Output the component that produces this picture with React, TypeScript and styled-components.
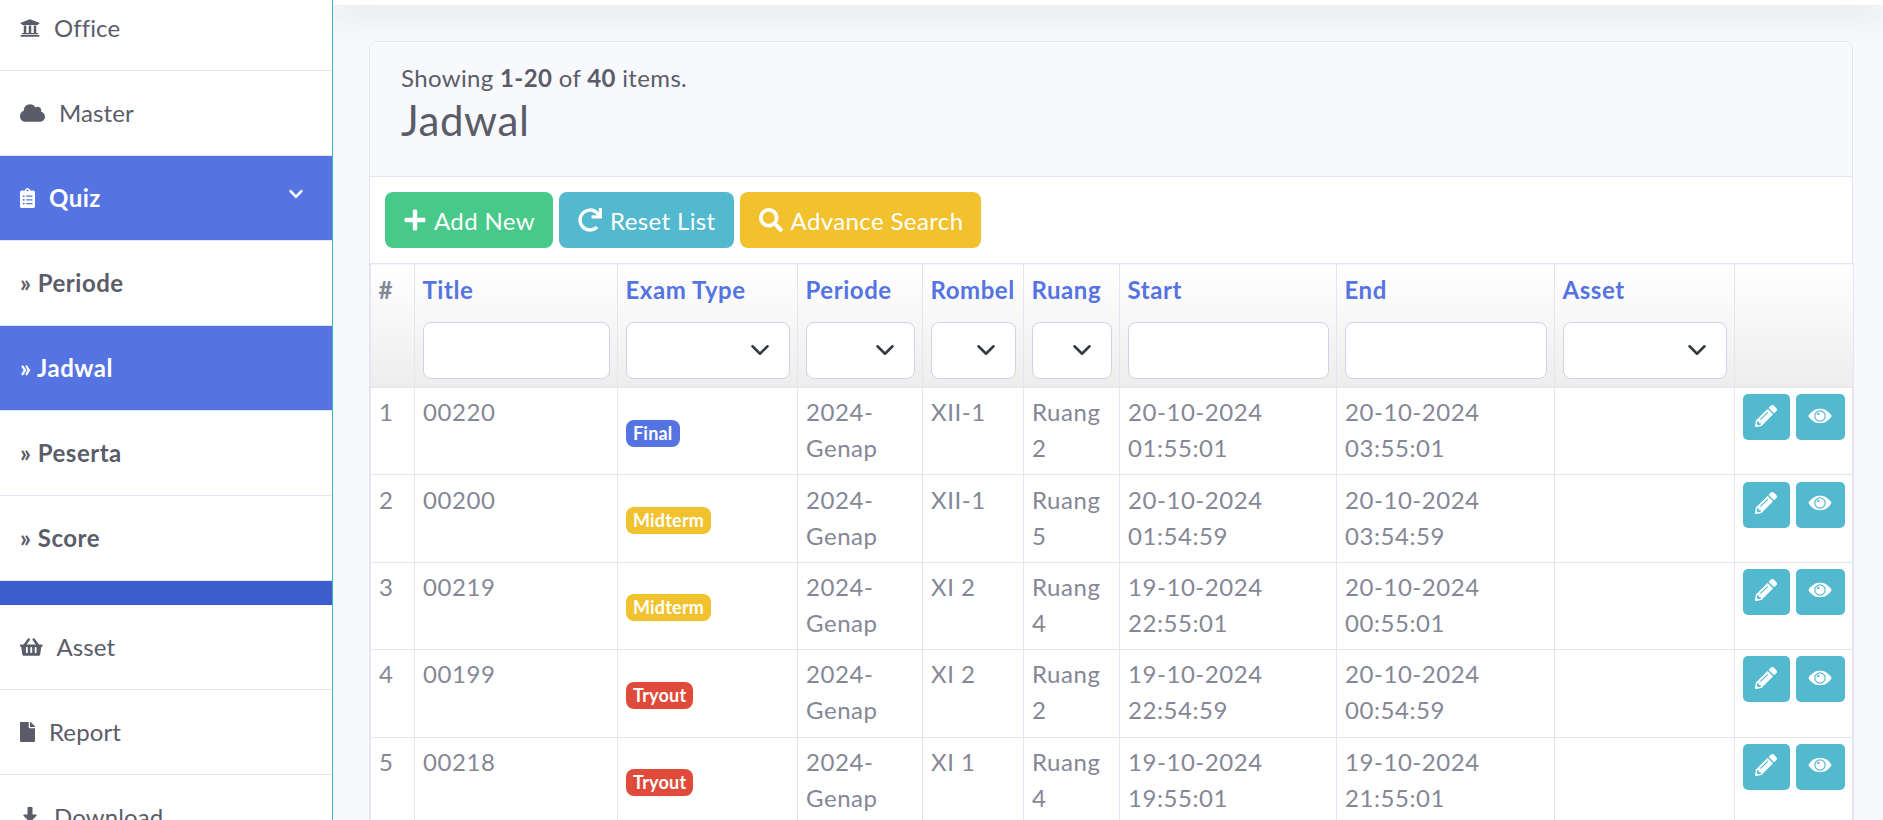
import React from "react";
import styled, { createGlobalStyle } from "styled-components";
import {
  FaUniversity,
  FaCloud,
  FaClipboardList,
  FaChevronDown,
  FaShoppingBasket,
  FaFile,
  FaDownload,
  FaPlus,
  FaRedo,
  FaSearch,
  FaPencilAlt,
} from "react-icons/fa";

const FONT = `Lato, "Noto Sans", sans-serif`;

const GlobalStyle = createGlobalStyle`
  html, body {
    margin: 0;
    height: 100%;
    overflow: hidden;
    background: #f8f9fc;
    font-family: ${FONT};
  }
  * { box-sizing: border-box; }
`;

type Kind = "Final" | "Midterm" | "Tryout";

const rows: {
  no: number;
  title: string;
  type: Kind;
  rombel: string;
  ruang: string;
  start: string;
  end: string;
}[] = [
  { no: 1, title: "00220", type: "Final", rombel: "XII-1", ruang: "Ruang 2", start: "20-10-2024 01:55:01", end: "20-10-2024 03:55:01" },
  { no: 2, title: "00200", type: "Midterm", rombel: "XII-1", ruang: "Ruang 5", start: "20-10-2024 01:54:59", end: "20-10-2024 03:54:59" },
  { no: 3, title: "00219", type: "Midterm", rombel: "XI 2", ruang: "Ruang 4", start: "19-10-2024 22:55:01", end: "20-10-2024 00:55:01" },
  { no: 4, title: "00199", type: "Tryout", rombel: "XI 2", ruang: "Ruang 2", start: "19-10-2024 22:54:59", end: "20-10-2024 00:54:59" },
  { no: 5, title: "00218", type: "Tryout", rombel: "XI 1", ruang: "Ruang 4", start: "19-10-2024 19:55:01", end: "19-10-2024 21:55:01" },
];

const columns: { label: string; width: number; control?: "input" | "select" }[] = [
  { label: "#", width: 44 },
  { label: "Title", width: 203, control: "input" },
  { label: "Exam Type", width: 180, control: "select" },
  { label: "Periode", width: 125, control: "select" },
  { label: "Rombel", width: 101, control: "select" },
  { label: "Ruang", width: 96, control: "select" },
  { label: "Start", width: 217, control: "input" },
  { label: "End", width: 218, control: "input" },
  { label: "Asset", width: 180, control: "select" },
  { label: "", width: 119 },
];

const Chevron = () => (
  <ChevronIcon viewBox="0 0 16 16" fill="none" stroke="#343a40" strokeWidth="2" strokeLinecap="round" strokeLinejoin="round">
    <path d="M2 5l6 6 6-6" />
  </ChevronIcon>
);

// the eye in the reference has a ring and a small pupil spot, unlike the package icon
const EyeGlyph = () => (
  <EyeSvg viewBox="0 0 24 16">
    <path fill="#fff" d="M0.4 8C3 3.4 7 .8 12 .8S21 3.4 23.6 8C21 12.6 17 15.2 12 15.2S3 12.6 .4 8z" />
    <circle cx="12" cy="8" r="5.2" fill="none" stroke="#53b9cf" strokeWidth="1.2" />
    <circle cx="10.3" cy="5.9" r="1.2" fill="#53b9cf" />
  </EyeSvg>
);

const App = () => {
  return (
    <>
      <GlobalStyle />
      <Page>
        <Sidebar>
          <NavItem>
            <NavIcon $w={20}>
              <FaUniversity />
            </NavIcon>
            Office
          </NavItem>
          <NavItem>
            <NavIcon $w={25}>
              <FaCloud />
            </NavIcon>
            Master
          </NavItem>
          <NavItem $active $bold>
            <NavIcon $w={15}>
              <FaClipboardList />
            </NavIcon>
            Quiz
            <NavCaret>
              <FaChevronDown />
            </NavCaret>
          </NavItem>
          <NavItem $bold>» Periode</NavItem>
          <NavItem $bold $active>
            » Jadwal
          </NavItem>
          <NavItem $bold>» Peserta</NavItem>
          <NavItem $bold>» Score</NavItem>
          <NavStrip />
          <NavItem>
            <NavIcon $w={22.5}>
              <FaShoppingBasket />
            </NavIcon>
            Asset
          </NavItem>
          <NavItem>
            <NavIcon $w={15}>
              <FaFile />
            </NavIcon>
            Report
          </NavItem>
          <NavItem>
            <NavIcon $w={20}>
              <FaDownload />
            </NavIcon>
            Download
          </NavItem>
        </Sidebar>
        <Main>
          <Topbar />
          <Card>
            <CardHeader>
              <Summary>
                Showing <b>1-20</b> of <b>40</b> items.
              </Summary>
              <Heading>Jadwal</Heading>
            </CardHeader>
            <Toolbar>
              <ActionButton $bg="#47c98a">
                <ButtonIcon $w={22}>
                  <FaPlus />
                </ButtonIcon>
                Add New
              </ActionButton>
              <ActionButton $bg="#53b9cf">
                <ButtonIcon $w={24}>
                  <FaRedo />
                </ButtonIcon>
                Reset List
              </ActionButton>
              <ActionButton $bg="#f2c12e">
                <ButtonIcon $w={24}>
                  <FaSearch />
                </ButtonIcon>
                Advance Search
              </ActionButton>
            </Toolbar>
            <Table>
              <colgroup>
                {columns.map((c, i) => (
                  <Col key={i} $w={c.width} />
                ))}
              </colgroup>
              <thead>
                <tr>
                  {columns.map((c, i) => (
                    <HeadCell key={i}>
                      <HeadLabel $plain={i === 0}>{c.label}</HeadLabel>
                      {c.control === "input" && <FilterInput />}
                      {c.control === "select" && (
                        <SelectWrap>
                          <FilterSelect />
                          <Chevron />
                        </SelectWrap>
                      )}
                    </HeadCell>
                  ))}
                </tr>
              </thead>
              <tbody>
                {rows.map((r) => (
                  <tr key={r.no}>
                    <Cell>{r.no}</Cell>
                    <Cell>{r.title}</Cell>
                    <BadgeCell>
                      <Badge $kind={r.type}>{r.type}</Badge>
                    </BadgeCell>
                    <Cell>2024-Genap</Cell>
                    <Cell>{r.rombel}</Cell>
                    <Cell>{r.ruang}</Cell>
                    <Cell>{r.start}</Cell>
                    <Cell>{r.end}</Cell>
                    <Cell />
                    <Cell>
                      <RowActions>
                        <RowButton $w={47}>
                          <FaPencilAlt />
                        </RowButton>
                        <RowButton $w={50}>
                          <EyeGlyph />
                        </RowButton>
                      </RowActions>
                    </Cell>
                  </tr>
                ))}
              </tbody>
            </Table>
          </Card>
        </Main>
      </Page>
    </>
  );
};

export default App;

const Page = styled.div`
  display: flex;
  height: 820px;
  overflow: hidden;
`;

const Sidebar = styled.nav`
  flex: 0 0 333px;
  background: #fff;
  border-right: 1px solid #36b9cc;
  margin-top: -14px;
`;

const NavItem = styled.div<{ $active?: boolean; $bold?: boolean }>`
  display: flex;
  align-items: center;
  height: 85px;
  padding: 0 29px 2px 20px;
  gap: 14px;
  font-size: 24px;
  font-weight: ${(p) => (p.$bold ? 700 : 400)};
  letter-spacing: ${(p) => (p.$bold ? "0.5px" : "0.1px")};
  color: ${(p) => (p.$active ? "#fff" : "#5a5c69")};
  background: ${(p) => (p.$active ? "#5574e2" : "#fff")};
  border-bottom: 1px solid #e3e6f0;
`;

const NavIcon = styled.span<{ $w: number }>`
  display: flex;
  flex: none;
  width: ${(p) => p.$w}px;
  margin-top: 2px;

  svg {
    width: 100%;
    height: 20px;
  }
`;

const NavCaret = styled.span`
  margin-left: auto;
  display: flex;
  padding-bottom: 6px;

  svg {
    height: 16px;
    width: 14px;
  }
`;

const NavStrip = styled.div`
  height: 24px;
  background: #3c5dcc;
`;

const Main = styled.main`
  flex: 1;
  min-width: 0;
  padding-right: 30px;
  overflow: hidden;
`;

const Topbar = styled.div`
  height: 5px;
  margin-right: -30px;
  background: #fff;
  box-shadow: 0 3px 34px rgba(58, 59, 69, 0.42);
`;

const Card = styled.section`
  margin: 36px 0 0 36px;
  background: #fff;
  border: 1px solid #e3e6f0;
  border-radius: 8px;
`;

const CardHeader = styled.header`
  height: 135px;
  padding: 18px 31px 0;
  background: #f8f9fc;
  border-bottom: 1px solid #e3e6f0;
  border-radius: 8px 8px 0 0;
  color: #5a5c69;
`;

const Summary = styled.div`
  font-size: 24px;
  line-height: 36px;
  letter-spacing: 0.35px;

  b {
    font-weight: 700;
  }
`;

const Heading = styled.h1`
  margin: 0;
  font-size: 42px;
  font-weight: 400;
  line-height: 48px;
  letter-spacing: 0.6px;
`;

const Toolbar = styled.div`
  display: flex;
  gap: 6px;
  height: 86px;
  padding: 15px 15px 0;
`;

const ActionButton = styled.button<{ $bg: string }>`
  display: flex;
  align-items: center;
  gap: 8px;
  height: 56px;
  padding: 0 18px 0 19px;
  border: 0;
  border-radius: 8px;
  background: ${(p) => p.$bg};
  color: #fff;
  font-family: ${FONT};
  font-size: 24px;
  letter-spacing: 0.38px;
`;

const ButtonIcon = styled.span<{ $w: number }>`
  display: flex;
  flex: none;
  width: ${(p) => p.$w}px;

  svg {
    width: 100%;
    height: 24px;
  }
`;

const Table = styled.table`
  width: 1483px;
  table-layout: fixed;
  border-collapse: collapse;
  color: #858796;
  font-size: 24px;
  line-height: 36px;
  letter-spacing: 0.55px;
`;

const Col = styled.col<{ $w: number }>`
  width: ${(p) => p.$w}px;
`;

const HeadCell = styled.th`
  height: 123px;
  padding: 8px 7.5px;
  vertical-align: top;
  text-align: left;
  border: 1px solid #e3e6f0;
  background: linear-gradient(#ffffff, #ededee);
`;

const HeadLabel = styled.div<{ $plain?: boolean }>`
  height: 50px;
  font-weight: 700;
  color: ${(p) => (p.$plain ? "#858796" : "#5574e2")};
`;

const FilterInput = styled.input`
  display: block;
  width: 100%;
  height: 57px;
  border: 1px solid #d1d3e2;
  border-radius: 8px;
  background: #fff;
`;

const SelectWrap = styled.div`
  position: relative;
`;

const FilterSelect = styled.select`
  display: block;
  width: 100%;
  height: 57px;
  appearance: none;
  border: 1px solid #d1d3e2;
  border-radius: 8px;
  background: #fff;
`;

const ChevronIcon = styled.svg`
  position: absolute;
  right: 20px;
  top: 18px;
  width: 20px;
  height: 20px;
  pointer-events: none;
`;

const Cell = styled.td`
  padding: 6.2px 8px 8.2px;
  vertical-align: top;
  border: 1px solid #e3e6f0;
`;

const BadgeCell = styled(Cell)`
  vertical-align: middle;
`;

const badgeColors: Record<Kind, string> = {
  Final: "#5574e2",
  Midterm: "#f2c12e",
  Tryout: "#e04a3a",
};

const Badge = styled.span<{ $kind: Kind }>`
  display: inline-block;
  height: 27px;
  padding: 0 7px;
  border-radius: 8px;
  background: ${(p) => badgeColors[p.$kind]};
  color: #fff;
  font-size: 18px;
  font-weight: 700;
  line-height: 27px;
  letter-spacing: 0.2px;
  vertical-align: middle;
`;

const RowActions = styled.div`
  display: flex;
  gap: 6px;
`;

const RowButton = styled.button<{ $w: number }>`
  display: flex;
  align-items: center;
  justify-content: center;
  width: ${(p) => p.$w}px;
  height: 46px;
  padding: 0 0 3px;
  border: 0;
  border-radius: 5px;
  background: #53b9cf;
  color: #fff;

  svg {
    width: 22px;
    height: 22px;
  }
`;

const EyeSvg = styled.svg`
  && {
    width: 24px;
    height: 16px;
  }
`;
